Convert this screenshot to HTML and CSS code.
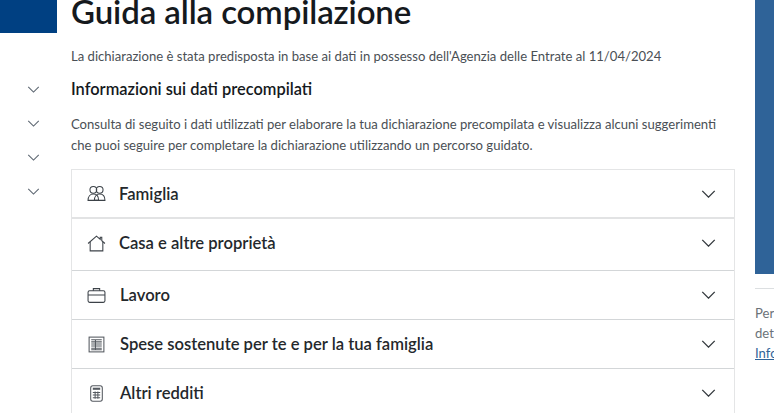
FILE: index.html
```html
<!DOCTYPE html>
<html lang="it">

<head>
  <meta charset="UTF-8" />
  <title>Guida alla compilazione</title>
  <link rel="stylesheet" href="styles.css">
</head>

<body>
  <div class="page">
    <div class="side">
      <div class="side-block"></div>
      <div class="side-list">
        <svg class="chev-small" viewBox="0 0 14 8"><path d="M1 1l6 6 6-6" /></svg>
        <svg class="chev-small" viewBox="0 0 14 8"><path d="M1 1l6 6 6-6" /></svg>
        <svg class="chev-small" viewBox="0 0 14 8"><path d="M1 1l6 6 6-6" /></svg>
        <svg class="chev-small" viewBox="0 0 14 8"><path d="M1 1l6 6 6-6" /></svg>
      </div>
    </div>

    <div class="main">
      <h1>Guida alla compilazione</h1>
      <p class="intro">La dichiarazione è stata predisposta in base ai dati in possesso dell'Agenzia delle Entrate al 11/04/2024</p>
      <h2>Informazioni sui dati precompilati</h2>
      <p class="desc">Consulta di seguito i dati utilizzati per elaborare la tua dichiarazione precompilata e visualizza alcuni suggerimenti<br>che puoi seguire per completare la dichiarazione utilizzando un percorso guidato.</p>

      <div class="accordion">
        <div class="row row-a">
          <svg class="icon" viewBox="0 0 18 16">
            <circle cx="6" cy="4.500" r="3.200" />
            <circle cx="12" cy="4.500" r="3.200" />
            <path d="M1 14.500c0-3.500 2-6 5-6 3.500 0 5 2.500 5 6z" />
            <path d="M7 14.500c0-3.500 2-6 5-6 3.500 0 5 2.500 5 6z" />
          </svg>
          <span class="label">Famiglia</span>
          <svg class="chev" viewBox="0 0 16 9"><path d="M1 1l7 7 7-7" /></svg>
        </div>
        <div class="row row-b">
          <svg class="icon" viewBox="0 0 18 16">
            <path d="M1 8l8-7 3.500 3V2h1.500v3.400L17 8" />
            <path d="M3 6.500V15h12V6.500" />
          </svg>
          <span class="label">Casa e altre proprietà</span>
          <svg class="chev" viewBox="0 0 16 9"><path d="M1 1l7 7 7-7" /></svg>
        </div>
        <div class="row row-c">
          <svg class="icon" viewBox="0 0 18 16">
            <rect x="1" y="3.500" width="16" height="11" rx="1.500" />
            <path d="M1 7.500h16M6 3.500V1.500h6v2" />
          </svg>
          <span class="label label-wide">Lavoro</span>
          <svg class="chev" viewBox="0 0 16 9"><path d="M1 1l7 7 7-7" /></svg>
        </div>
        <div class="row row-d">
          <svg class="icon icon-dense" viewBox="0 0 18 16">
            <rect x="2" y="1" width="14" height="14" />
            <path d="M4 3.500h10M4 5.500h10M4 7.500h10M4 9.500h10M4 11.500h10M4 13h10M8 3.500v9.500" />
          </svg>
          <span class="label label-wide">Spese sostenute per te e per la tua famiglia</span>
          <svg class="chev" viewBox="0 0 16 9"><path d="M1 1l7 7 7-7" /></svg>
        </div>
        <div class="row row-e">
          <svg class="icon icon-dense" viewBox="0 0 18 16">
            <rect x="3.500" y="0.700" width="11" height="14.600" rx="2" />
            <path class="thick" d="M5.500 3.500h7" />
            <path d="M5.500 7h7M5.500 9.500h7M5.500 12h7M7.700 6v7M10.300 6v7" />
          </svg>
          <span class="label label-wide">Altri redditi</span>
          <svg class="chev" viewBox="0 0 16 9"><path d="M1 1l7 7 7-7" /></svg>
        </div>
      </div>
    </div>

    <div class="aside">
      <div class="banner"></div>
      <hr class="aside-line">
      <p class="aside-text">Per</p>
      <p class="aside-text">det</p>
      <p class="aside-text"><a href="#">Info</a></p>
    </div>
  </div>
</body>

</html>
```

FILE: styles.css
```css
html,
body {
  margin: 0;
  height: 100%;
  overflow: hidden;
  background: #fff;
}

body {
  font-family: "Lato", "Noto Sans", sans-serif;
  color: #15191d;
}

.page {
  display: grid;
  grid-template-columns: 57px 664px 25px;
  column-gap: 14px;
  width: 774px;
  height: 413px;
  overflow: hidden;
}

.side-block {
  height: 33px;
  background: #004082;
}

.side-list {
  display: flex;
  flex-direction: column;
  align-items: center;
  gap: 27px;
  margin: 53px 0 0 10px;
  width: 47px;
}

.chev-small {
  width: 13px;
  height: 7px;
  fill: none;
  stroke: #5b6570;
  stroke-width: 1.200;
}

.main {
  min-width: 0;
}

h1 {
  margin: -11px 0 0;
  font-size: 33px;
  line-height: 44px;
  font-weight: 600;
  letter-spacing: -0.1px;
  white-space: nowrap;
}

.intro {
  margin: 13px 0 0;
  font-size: 13.100px;
  line-height: 20px;
  color: #4a4f55;
  white-space: nowrap;
}

h2 {
  margin: 11px 0 0;
  font-size: 16.400px;
  line-height: 24px;
  font-weight: 600;
  white-space: nowrap;
}

.desc {
  margin: 13px 0 0;
  font-size: 13.100px;
  line-height: 21px;
  color: #4a4f55;
  white-space: nowrap;
}

.accordion {
  margin-top: 13px;
  border: 1px solid #e4e5e6;
  border-bottom: 0;
}

.row {
  display: flex;
  align-items: center;
  padding: 0 18px 0 15px;
  border-bottom: 1px solid #d3d6d8;
}

.row-a {
  height: 47px;
  border-bottom-width: 2px;
  border-bottom-color: #e2e3e4;
}

.row-b {
  height: 48px;
  padding-bottom: 3px;
}

.row-c,
.row-d {
  height: 48px;
}

.row-e {
  height: 48px;
  border-bottom: 0;
}

.icon {
  flex: none;
  width: 19px;
  height: 17px;
  fill: none;
  stroke: #3c4248;
  stroke-width: 1;
}

.icon-dense {
  stroke: #555a60;
}

.icon .thick {
  stroke-width: 2;
}

.label {
  flex: 1;
  margin-left: 13px;
  font-size: 16.600px;
  font-weight: 600;
  color: #24282c;
  white-space: nowrap;
}

.label-wide {
  margin-left: 14px;
}

.chev {
  flex: none;
  width: 15px;
  height: 8px;
  fill: none;
  stroke: #33383d;
  stroke-width: 1.500;
}

.aside {
  min-width: 0;
  margin-left: 6px;
  overflow: hidden;
}

.banner {
  height: 274px;
  background: #2f6398;
}

.aside-line {
  margin: 14px 0 0;
  border: 0;
  border-top: 1px solid #dcdfe1;
}

.aside-text {
  margin: 0;
  font-size: 13.100px;
  line-height: 20px;
  color: #6b7278;
  white-space: nowrap;
}

.aside-line + .aside-text {
  margin-top: 14px;
}

.aside-text a {
  color: #2f6398;
}
```
